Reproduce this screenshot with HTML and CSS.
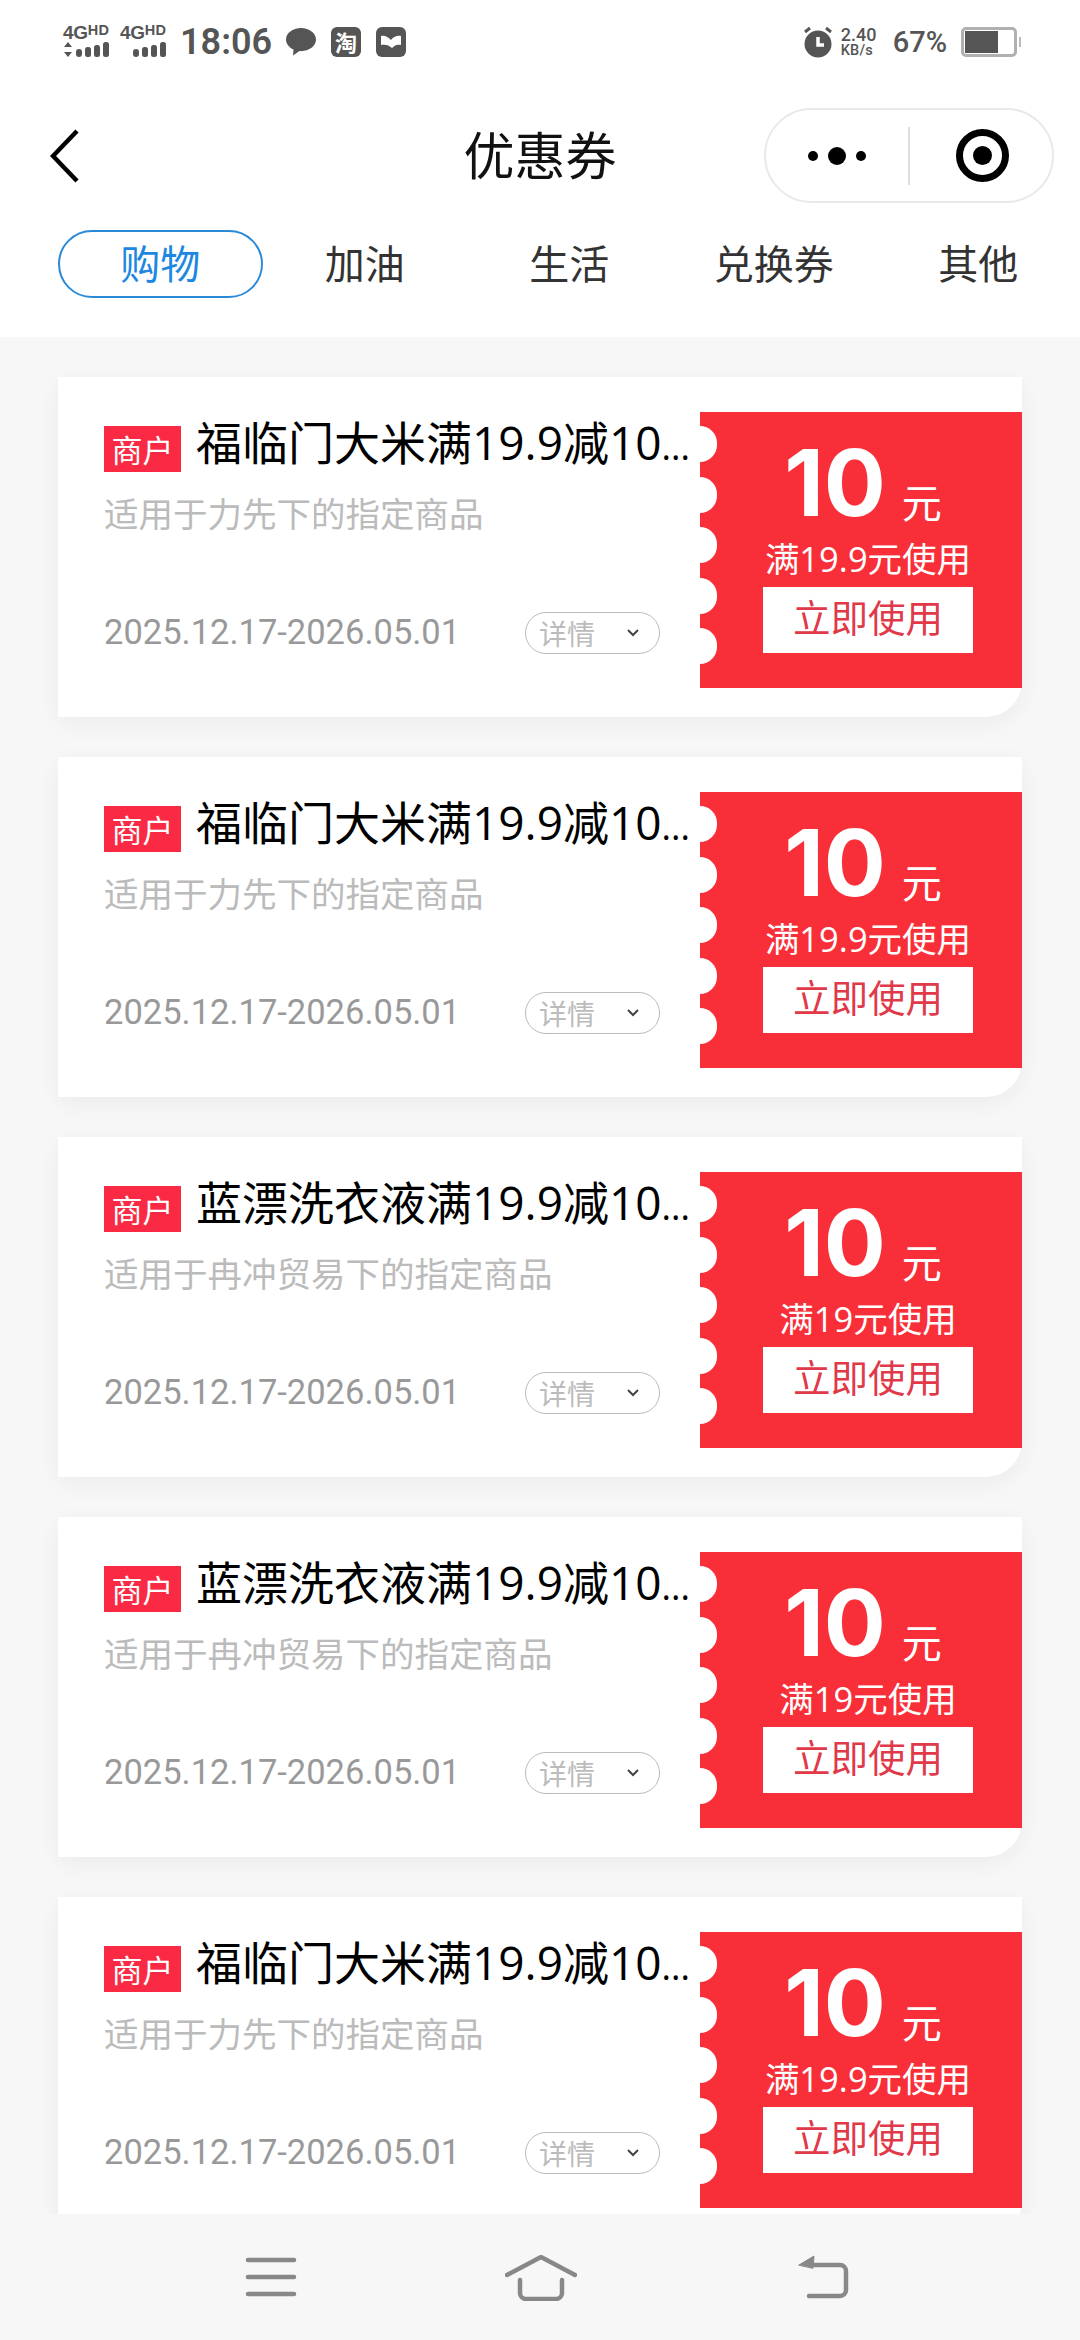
FILE: index.html
```html
<!DOCTYPE html>
<html lang="zh-CN">
<head>
<meta charset="utf-8">
<title>优惠券</title>
<link rel="stylesheet" href="styles.css">
</head>
<body>
<div class="page">
  <header class="top">
    <div class="status">
      <div class="status-left">
        <div class="sig">
          <div class="sig-text"><span class="sig-4g">4G</span><span class="sig-hd">HD</span></div>
          <svg class="sig-bars" width="47" height="15" viewBox="0 0 47 15"><path class="ic-fill" d="M5 0l4 5H1zM5 15l4-5H1z"/><rect class="ic-fill" x="13" y="7" width="6" height="8" rx="3"/><rect class="ic-fill" x="22" y="5" width="6" height="10" rx="2.5"/><rect class="ic-fill" x="31" y="3" width="6" height="12" rx="2.5"/><rect class="ic-fill" x="40" y="0" width="6" height="15" rx="2.5"/></svg>
        </div>
        <div class="sig">
          <div class="sig-text"><span class="sig-4g">4G</span><span class="sig-hd">HD</span></div>
          <svg class="sig-bars" width="47" height="15" viewBox="0 0 47 15"><rect class="ic-fill" x="13" y="7" width="6" height="8" rx="3"/><rect class="ic-fill" x="22" y="5" width="6" height="10" rx="2.5"/><rect class="ic-fill" x="31" y="3" width="6" height="12" rx="2.5"/><rect class="ic-fill" x="40" y="0" width="6" height="15" rx="2.5"/></svg>
        </div>
        <span class="time">18:06</span>
        <svg class="st-icon" width="30" height="28" viewBox="0 0 30 28"><path class="ic-fill" d="M15 0C6.7 0 0 5.2 0 11.6c0 4.300 3 8 7.500 10l-.5 6 6.500-4.500c.5 0 1 .1 1.500.1 8.300 0 15-5.200 15-11.600S23.300 0 15 0z"/></svg>
        <span class="app-sq app-tao">淘</span>
        <svg class="st-icon" width="30" height="30" viewBox="0 0 30 30"><rect class="ic-fill" width="30" height="30" rx="6"/><path class="ic-white" d="M5 9c4-1 7 1 10 4 2-3 6-5 10-4v9c-4-1-6 0-9 3-3-3-7-4-11-3z"/></svg>
      </div>
      <div class="status-right">
        <svg class="st-icon alarm" width="30" height="32" viewBox="0 0 30 32"><circle class="ic-fill" cx="15" cy="18" r="13.500"/><path class="ic-white-line" d="M15 11v8h6"/><path class="ic-line" d="M2 6l5-4M28 6l-5-4"/></svg>
        <div class="speed"><span class="speed-n">2.40</span><span class="speed-u">KB/s</span></div>
        <span class="batt-pct">67%</span>
        <div class="battery"><div class="batt-body"><div class="batt-fill"></div></div><div class="batt-nub"></div></div>
      </div>
    </div>
    <div class="navbar">
      <svg class="back" width="30" height="54" viewBox="0 0 30 54"><path d="M27 2L3 27l24 25"/></svg>
      <h1 class="nav-title">优惠券</h1>
      <div class="capsule">
        <div class="cap-more"><i class="dot"></i><i class="dot dot-big"></i><i class="dot"></i></div>
        <i class="cap-div"></i>
        <div class="cap-target"><i class="target-in"></i></div>
      </div>
    </div>
    <nav class="tabs">
      <span class="tab tab-on">购物</span>
      <span class="tab">加油</span>
      <span class="tab">生活</span>
      <span class="tab">兑换券</span>
      <span class="tab">其他</span>
    </nav>
  </header>

  <main class="list">
    <article class="card">
      <div class="info">
        <div class="title-row"><span class="badge">商户</span><span class="title">福临门大米满19.9减10<span class="ell">...</span></span></div>
        <p class="sub">适用于力先下的指定商品</p>
        <div class="date-row"><span class="date">2025.12.17-2026.05.01</span><span class="more"><span>详情</span><svg width="14" height="10" viewBox="0 0 14 10"><path d="M2 2l5 5 5-5"/></svg></span></div>
      </div>
      <div class="coupon">
        <div class="notches"><i></i><i></i><i></i><i></i><i></i></div>
        <div class="coupon-body">
          <div class="amount"><span class="num">10</span><span class="unit">元</span></div>
          <div class="cond">满19.9元使用</div>
          <div class="use">立即使用</div>
        </div>
      </div>
    </article>
    <article class="card">
      <div class="info">
        <div class="title-row"><span class="badge">商户</span><span class="title">福临门大米满19.9减10<span class="ell">...</span></span></div>
        <p class="sub">适用于力先下的指定商品</p>
        <div class="date-row"><span class="date">2025.12.17-2026.05.01</span><span class="more"><span>详情</span><svg width="14" height="10" viewBox="0 0 14 10"><path d="M2 2l5 5 5-5"/></svg></span></div>
      </div>
      <div class="coupon">
        <div class="notches"><i></i><i></i><i></i><i></i><i></i></div>
        <div class="coupon-body">
          <div class="amount"><span class="num">10</span><span class="unit">元</span></div>
          <div class="cond">满19.9元使用</div>
          <div class="use">立即使用</div>
        </div>
      </div>
    </article>
    <article class="card">
      <div class="info">
        <div class="title-row"><span class="badge">商户</span><span class="title">蓝漂洗衣液满19.9减10<span class="ell">...</span></span></div>
        <p class="sub">适用于冉冲贸易下的指定商品</p>
        <div class="date-row"><span class="date">2025.12.17-2026.05.01</span><span class="more"><span>详情</span><svg width="14" height="10" viewBox="0 0 14 10"><path d="M2 2l5 5 5-5"/></svg></span></div>
      </div>
      <div class="coupon">
        <div class="notches"><i></i><i></i><i></i><i></i><i></i></div>
        <div class="coupon-body">
          <div class="amount"><span class="num">10</span><span class="unit">元</span></div>
          <div class="cond">满19元使用</div>
          <div class="use">立即使用</div>
        </div>
      </div>
    </article>
    <article class="card">
      <div class="info">
        <div class="title-row"><span class="badge">商户</span><span class="title">蓝漂洗衣液满19.9减10<span class="ell">...</span></span></div>
        <p class="sub">适用于冉冲贸易下的指定商品</p>
        <div class="date-row"><span class="date">2025.12.17-2026.05.01</span><span class="more"><span>详情</span><svg width="14" height="10" viewBox="0 0 14 10"><path d="M2 2l5 5 5-5"/></svg></span></div>
      </div>
      <div class="coupon">
        <div class="notches"><i></i><i></i><i></i><i></i><i></i></div>
        <div class="coupon-body">
          <div class="amount"><span class="num">10</span><span class="unit">元</span></div>
          <div class="cond">满19元使用</div>
          <div class="use">立即使用</div>
        </div>
      </div>
    </article>
    <article class="card">
      <div class="info">
        <div class="title-row"><span class="badge">商户</span><span class="title">福临门大米满19.9减10<span class="ell">...</span></span></div>
        <p class="sub">适用于力先下的指定商品</p>
        <div class="date-row"><span class="date">2025.12.17-2026.05.01</span><span class="more"><span>详情</span><svg width="14" height="10" viewBox="0 0 14 10"><path d="M2 2l5 5 5-5"/></svg></span></div>
      </div>
      <div class="coupon">
        <div class="notches"><i></i><i></i><i></i><i></i><i></i></div>
        <div class="coupon-body">
          <div class="amount"><span class="num">10</span><span class="unit">元</span></div>
          <div class="cond">满19.9元使用</div>
          <div class="use">立即使用</div>
        </div>
      </div>
    </article>
  </main>

  <footer class="sysnav">
    <svg width="54" height="44" viewBox="0 0 54 44"><path d="M4 5h46M4 22h46M4 39h46"/></svg>
    <svg width="72" height="46" viewBox="0 0 72 46"><path d="M2 20L36 2l34 18"/><path d="M15 25v13a6 6 0 0 0 6 6h30a6 6 0 0 0 6-6V25"/></svg>
    <svg width="54" height="44" viewBox="0 0 54 44"><path class="arrow-head" d="M1 10l15-9-1 12z"/><path d="M12 10h30a6 6 0 0 1 6 6v19a6 6 0 0 1-6 6H11"/></svg>
  </footer>
</div>
</body>
</html>
```

FILE: styles.css
```css
* { box-sizing: border-box; }
html, body { margin: 0; padding: 0; }
body { font-family: "Open Sans", "Noto Sans CJK SC", sans-serif; }
i { display: block; }

.page {
  width: 1080px;
  height: 2340px;
  display: flex;
  flex-direction: column;
  overflow: hidden;
  background: #f7f7f7;
}

/* header */
.top { height: 337px; flex: none; background: #fff; }

.status {
  height: 84px;
  display: flex;
  justify-content: space-between;
  align-items: center;
  padding: 0 59px 0 63px;
  color: #555;
}
.status-left, .status-right { display: flex; align-items: center; }
.status-left { gap: 10px; }
.status-right { gap: 12px; }
.st-icon { display: block; flex: none; }
.alarm { margin-right: -4px; }
.ic-fill { fill: #555; }
.ic-white { fill: #fff; }
.ic-white-line { fill: none; stroke: #fff; stroke-width: 3.500; }
.ic-line { fill: none; stroke: #555; stroke-width: 3; }

.sig { width: 47px; margin-bottom: 3px; display: flex; flex-direction: column; gap: 1px; }
.sig-text { display: flex; height: 17px; align-items: flex-start; font-family: "Liberation Sans", sans-serif; font-weight: 700; line-height: 17px; }
.sig-4g { font-size: 19px; letter-spacing: -.3px; }
.sig-hd { font-size: 14.500px; line-height: 12px; letter-spacing: .3px; }
.sig-bars { display: block; }
.time {
  width: 91px;
  margin: 0 5px 0 3px;
  font: 600 36px/40px Roboto, sans-serif;
}
.app-sq {
  width: 30px;
  height: 30px;
  margin-left: 5px;
  border-radius: 6px;
  background: #555;
  color: #fff;
  font-family: "Noto Sans CJK SC", sans-serif;
  font-weight: 700;
  font-size: 22px;
  line-height: 29px;
  text-align: center;
}
.status-left > svg:last-child { margin-left: 5px; }
.speed { display: flex; flex-direction: column; width: 35px; font-family: Roboto, sans-serif; font-weight: 500; }
.speed-n { font-size: 18px; line-height: 17px; }
.speed-u { font-size: 14.500px; line-height: 15px; letter-spacing: .2px; }
.batt-pct { font: 500 29px/32px Roboto, sans-serif; margin: 0 2px 0 5px; }
.battery { display: flex; align-items: center; gap: 2px; }
.batt-body { width: 56px; height: 30px; padding: 1px; border: 3px solid #b0b0b0; border-radius: 5px; }
.batt-fill { width: 33px; height: 100%; background: #555; }
.batt-nub { width: 2px; height: 10px; background: #bbb; }

.navbar {
  margin-top: 24px;
  height: 95px;
  display: grid;
  grid-template-columns: 1fr auto 1fr;
  align-items: center;
  padding: 0 26px;
}
.back { display: block; margin-left: 24px; }
.back path { fill: none; stroke: #000; stroke-width: 4.500; }
.nav-title { margin: -5px 0 0; font: 400 51px/60px "Noto Sans CJK SC", sans-serif; color: #111; }
.capsule {
  justify-self: end;
  width: 290px;
  height: 95px;
  display: flex;
  align-items: center;
  border: 2px solid #e9e9e9;
  border-radius: 48px;
}
.cap-more { width: 142px; display: flex; justify-content: center; align-items: center; gap: 10px; }
.dot { width: 10px; height: 10px; border-radius: 50%; background: #000; }
.dot-big { width: 18px; height: 18px; }
.cap-div { width: 2px; height: 58px; background: #ddd; }
.cap-target {
  width: 53px;
  height: 53px;
  margin-left: 46px;
  display: flex;
  justify-content: center;
  align-items: center;
  border: 7px solid #000;
  border-radius: 50%;
}
.target-in { width: 19px; height: 19px; border-radius: 50%; background: #000; }

.tabs {
  margin: 27px 0 0 58px;
  display: grid;
  grid-template-columns: repeat(5, 204.500px);
  height: 68px;
}
.tab {
  display: flex;
  justify-content: center;
  align-items: center;
  padding-bottom: 4px;
  font: 400 40px/48px "Noto Sans CJK SC", sans-serif;
  color: #333;
}
.tab-on { border: 2px solid #2b8ad8; border-radius: 34px; color: #1c88e2; }

/* list */
.list {
  flex: 1;
  min-height: 0;
  overflow: hidden;
  display: flex;
  flex-direction: column;
  gap: 40px;
  padding: 40px 58px 0;
}
.card {
  flex: none;
  height: 340px;
  display: flex;
  background: #fff;
  border-bottom-right-radius: 36px;
  box-shadow: 0 6px 24px rgba(0, 0, 0, .05);
}
.info { width: 642px; flex: none; padding: 49px 0 0 46px; }
.title-row { display: flex; align-items: flex-start; height: 46px; }
.badge {
  flex: none;
  width: 77px;
  height: 46px;
  background: #fa2a45;
  color: #fff;
  font: 400 31px/46px "Noto Sans CJK SC", sans-serif;
  text-align: center;
}
.title {
  min-width: 0;
  flex: 1;
  margin: -12px 0 0 15px;
  font-size: 46px;
  line-height: 56px;
  color: #000;
  white-space: nowrap;
}
.ell { font-size: 36px; }
.sub { margin: 16px 0 0; font: 400 34.500px/48px "Noto Sans CJK SC", sans-serif; color: #bbb; white-space: nowrap; }
.date-row { margin: 76px 40px 0 0; height: 42px; display: flex; justify-content: space-between; align-items: center; }
.date { padding-bottom: 1px; font: 400 34.500px/39px Roboto, sans-serif; color: #999; }
.more {
  width: 135px;
  height: 42px;
  display: flex;
  align-items: center;
  justify-content: space-between;
  padding: 0 19px 0 13px;
  border: 1.500px solid #bbb;
  border-radius: 21px;
  font: 400 28px/38px "Noto Sans CJK SC", sans-serif;
  color: #bbb;
}
.more svg { display: block; }
.more path { fill: none; stroke: #444; stroke-width: 2; }

.coupon {
  flex: none;
  width: 322px;
  height: 276px;
  margin-top: 35px;
  display: flex;
  background: #f82f38;
  color: #fff;
}
.notches { width: 17px; flex: none; padding-top: 14px; display: flex; flex-direction: column; gap: 14.500px; }
.notches i { width: 17px; height: 36px; background: #fff; border-radius: 0 18px 18px 0; }
.coupon-body { flex: 1; display: flex; flex-direction: column; align-items: center; padding: 26px 3px 0 0; }
.amount { height: 90px; display: flex; align-items: flex-end; margin-right: 10px; }
.num { font: 700 92px/90px Inter, sans-serif; }
.unit { margin: 0 0 3px 16px; font: 400 40px/48px "Noto Sans CJK SC", sans-serif; }
.cond { margin-top: 8px; font-size: 34.500px; line-height: 46px; white-space: nowrap; }
.use {
  margin-top: 5px;
  width: 210px;
  height: 66px;
  background: #fff;
  color: #e0394a;
  font: 400 37.500px/58px "Noto Sans CJK SC", sans-serif;
  text-align: center;
}

/* system nav */
.sysnav {
  flex: none;
  height: 126px;
  padding-top: 39px;
  display: flex;
  align-items: flex-start;
  background: #f7f7f7;
}
.sysnav svg { display: block; flex: none; }
.sysnav path { fill: none; stroke: #888; stroke-width: 4.500; stroke-linecap: round; stroke-linejoin: round; }
.sysnav path.arrow-head { fill: #888; stroke-width: 1; }
.sysnav svg:nth-child(1) { margin: 2px 0 0 244px; }
.sysnav svg:nth-child(2) { margin: 2px 0 0 207px; }
.sysnav svg:nth-child(3) { margin: 2px 0 0 221px; }
```
